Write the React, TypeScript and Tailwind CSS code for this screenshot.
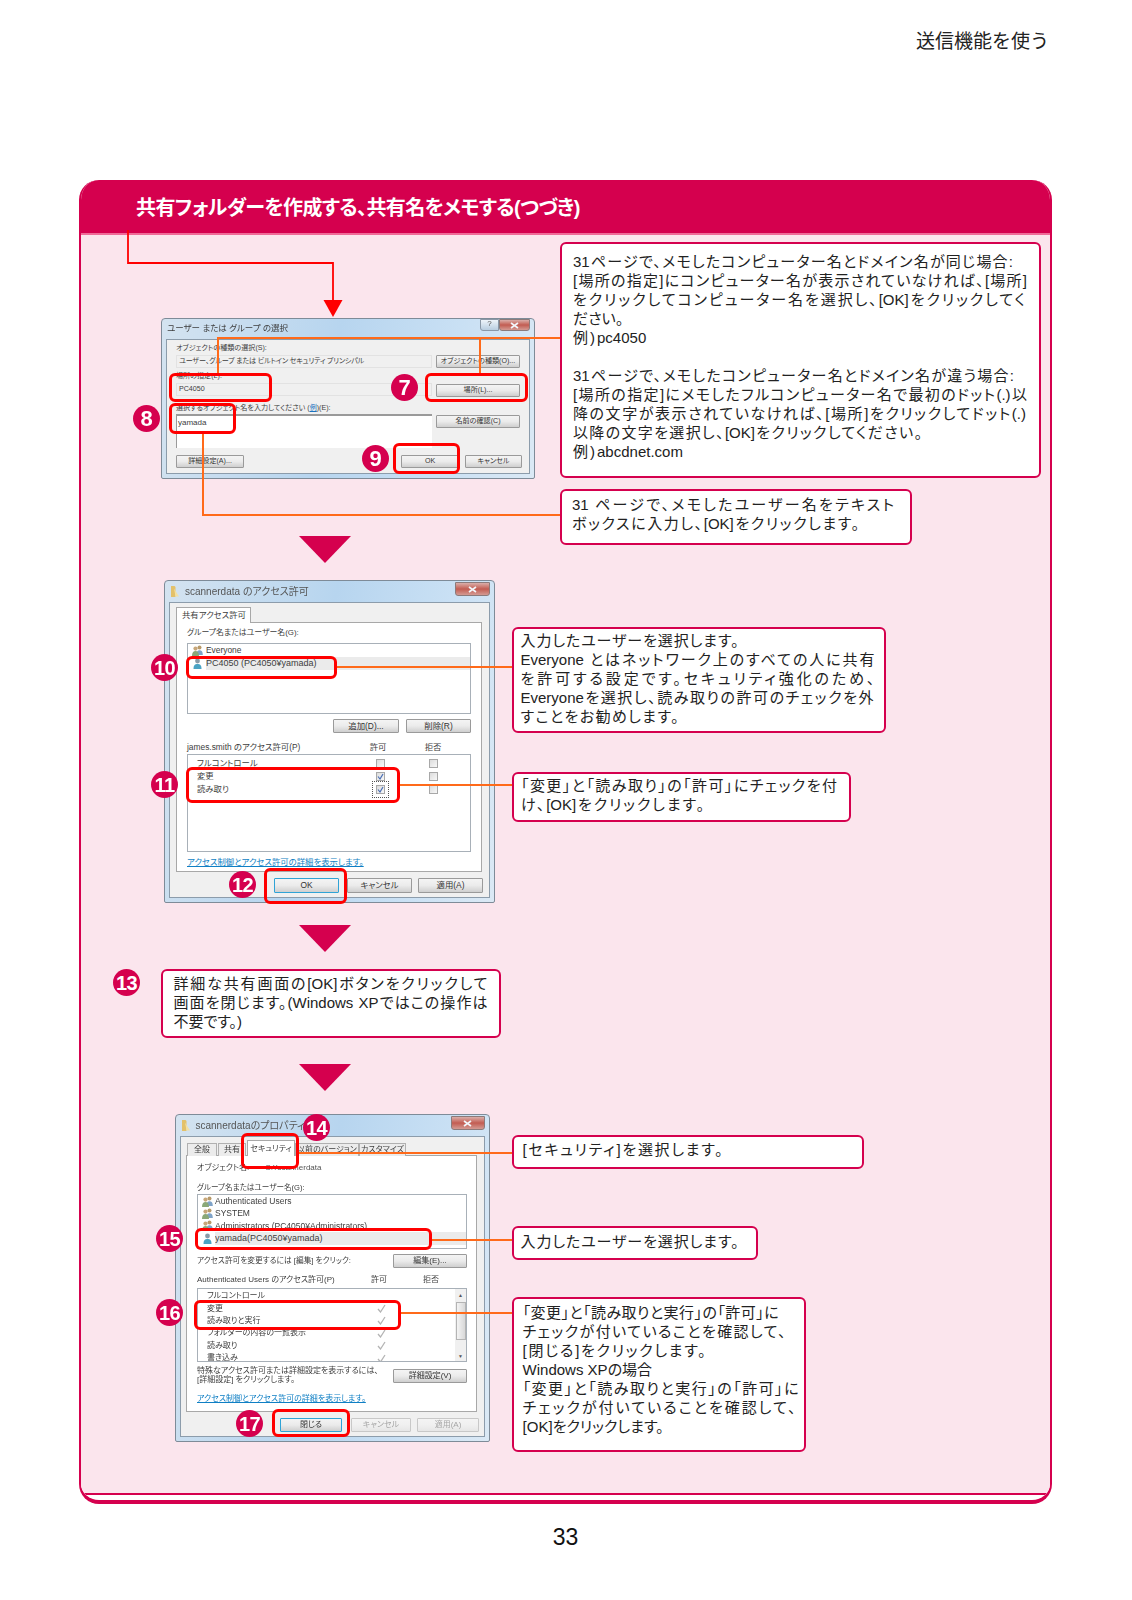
import React from 'react';

const Callout: React.FC<{ className: string; children: React.ReactNode }> = ({ className, children }) => (
  <div className={`border-2 border-[#d5004e] rounded-[6px] bg-white text-[15px] leading-[19px] text-[#222] [font-feature-settings:'palt'] ${className}`}>
    {children}
  </div>
);

const Fit: React.FC<{ className: string; children: React.ReactNode }> = ({ className, children }) => (
  <div className={`h-[19px] [text-align-last:justify] ${className}`}>{children}</div>
);

const Plain: React.FC<{ children: React.ReactNode }> = ({ children }) => (
  <div className="h-[19px]">{children}</div>
);

const Badge: React.FC<{ n: number; className?: string }> = ({ n, className = '' }) => (
  <div className={`absolute z-20 w-[27px] h-[27px] rounded-full bg-[#d5004e] text-white font-bold flex items-center justify-center ${n > 9 ? 'text-[20px] tracking-[-0.5px]' : 'text-[22px]'} ${className}`}>
    {n}
  </div>
);

const Hl: React.FC<{ className: string }> = ({ className }) => (
  <div className={`absolute z-10 border-[3.5px] border-[#ff0000] rounded-[6px] ${className}`} />
);

const Wire: React.FC<{ className: string }> = ({ className }) => (
  <div className={`absolute z-10 bg-[#ff6a1a] ${className}`} />
);

const Triangle = ({ className }: { className: string }) => (
  <svg width="52" height="27" viewBox="0 0 52 27" className={`block ${className}`}>
    <path d="M0 0H52L26 27Z" fill="#d5004e" />
  </svg>
);

const Btn: React.FC<{ className: string; active?: boolean; off?: boolean; children: React.ReactNode }> = ({ className, active, off, children }) => (
  <div
    className={`flex items-center justify-center shrink-0 whitespace-nowrap rounded-[1px] border leading-none bg-gradient-to-b from-[#f4f4f4] via-[#ebebeb] to-[#cfcfcf] ${
      active ? 'border-[#2fa3d6] border-[1.5px]' : 'border-[#9a9a9a]'
    } ${off ? 'text-[#a5a5a5] border-[#c8c8c8] from-[#f2f2f2] via-[#f0f0f0] to-[#e6e6e6]' : 'text-[#333]'} ${className}`}
  >
    {children}
  </div>
);

const CloseBtn = ({ className }: { className: string }) => (
  <div className={`flex items-center justify-center rounded-b-[3px] border border-[#8c7a7a] bg-gradient-to-b from-[#d9aeaa] via-[#c25c52] to-[#d39a93] ${className}`}>
    <svg width="9" height="7" viewBox="0 0 9 7">
      <path d="M1 1L8 6M8 1L1 6" stroke="#f2f6fa" strokeWidth="1.7" />
    </svg>
  </div>
);

const Folder = () => (
  <svg width="11" height="13" viewBox="0 0 11 13" className="shrink-0">
    <path d="M1 1h3.5l1 1v10H1z" fill="#e3c16a" />
    <path d="M4 3.5l5 8H5.5z" fill="#f3e0a2" />
  </svg>
);

const UserIcon = () => (
  <svg width="11" height="11" viewBox="0 0 11 11" className="shrink-0">
    <circle cx="5.5" cy="3" r="2.4" fill="#8a9ba8" />
    <path d="M1.5 11c0-4 1.5-5 4-5s4 1 4 5z" fill="#4aa3c4" />
  </svg>
);

const GroupIcon = () => (
  <svg width="11" height="11" viewBox="0 0 11 11" className="shrink-0">
    <circle cx="7.5" cy="2.6" r="2" fill="#b89a6a" />
    <path d="M4.5 10c0-3.5 1-4.8 3-4.8s3.3 1.3 3.3 4.8z" fill="#7fa3c8" />
    <circle cx="3.5" cy="3.6" r="2.1" fill="#c7a77a" />
    <path d="M0 11c0-3.6 1.3-5 3.5-5S7 7.4 7 11z" fill="#8aa878" />
  </svg>
);

const Check: React.FC<{ on?: boolean; focus?: boolean }> = ({ on, focus }) => (
  <div className={`w-[11px] h-[11px] flex items-center justify-center ${focus ? 'outline outline-1 outline-dotted outline-[#555] outline-offset-[2px]' : ''}`}>
    <div className="w-[9px] h-[9px] border border-[#a8a8a8] bg-gradient-to-br from-[#dcdcdc] to-[#f8f8f8] flex items-center justify-center">
      {on && (
        <svg width="7" height="7" viewBox="0 0 7 7">
          <path d="M1 3.5L3 6L6 1" stroke="#4a6fb5" strokeWidth="1.2" fill="none" />
        </svg>
      )}
    </div>
  </div>
);

const Tick = () => (
  <svg width="9" height="9" viewBox="0 0 9 9">
    <path d="M1 5L3.5 8L8 1" stroke="#b4b4b4" strokeWidth="1.3" fill="none" />
  </svg>
);

const Frame: React.FC<{ className: string; children: React.ReactNode }> = ({ className, children }) => (
  <div className={`border border-[#7e8b98] rounded-t-[4px] rounded-b-[2px] bg-[linear-gradient(100deg,#d4e3f0_0%,#b7d5ef_45%,#c9e0f4_75%,#dbe9f5_100%)] flex flex-col [filter:blur(0.3px)] text-[#3d3d3d] leading-none whitespace-nowrap [font-feature-settings:'palt'] ${className}`}>
    {children}
  </div>
);

const UserSelectDialog = () => (
  <div className="relative w-[372px] h-[160px]">
    <Frame className="w-[374px] h-[161px] -ml-px">
      <div className="h-[20px] flex items-start justify-between pl-[5px] pr-[4px]">
        <span className="text-[8.5px] mt-[5px]">ユーザー または グループ の選択</span>
        <div className="flex">
          <div className="w-[19px] h-[12px] rounded-bl-[3px] border border-[#8a98a8] bg-gradient-to-b from-[#eef4fa] to-[#b8cde0] text-[8px] text-[#555] text-center">?</div>
          <CloseBtn className="w-[31px] h-[12px]" />
        </div>
      </div>
      <div className="mx-[4px] h-[135px] border border-[#8c9cab] bg-[#f0f0f0] pl-[9px] pr-[9px] pt-[5px] text-[7.1px]">
        <div className="h-[7px] flex items-center">オブジェクトの種類の選択(S):</div>
        <div className="mt-[3px] flex justify-between">
          <div className="w-[256px] h-[13px] border border-[#e2e2e2] flex items-center px-[2px] tracking-[-0.2px]">ユーザー、グループ または ビルトイン セキュリティ プリンシパル</div>
          <Btn className="w-[84px] h-[13px]">オブジェクトの種類(O)...</Btn>
        </div>
        <div className="mt-[5px] h-[7px] flex items-center">場所の指定(L):</div>
        <div className="mt-[3px] flex justify-between">
          <div className="w-[256px] h-[13px] border border-[#e2e2e2] flex items-center px-[2px]">PC4050</div>
          <Btn className="w-[84px] h-[13px] mt-[1px]">場所(L)...</Btn>
        </div>
        <div className="mt-[8px] h-[7px] flex items-center whitespace-pre">選択するオブジェクト名を入力してください (<span className="text-[#1a73c0] underline">例</span>)(E):</div>
        <div className="mt-[2px] flex justify-between">
          <div className="w-[256px] h-[34px] border-t-2 border-l border-[#9a9a9a] bg-white px-[1px] pt-[3px] text-[8px]">yamada</div>
          <Btn className="w-[84px] h-[13px] mt-[1px]">名前の確認(C)</Btn>
        </div>
        <div className="mt-[7px] flex">
          <Btn className="w-[68px] h-[13px]">詳細設定(A)...</Btn>
          <Btn className="w-[58px] h-[13px] ml-[157px]">OK</Btn>
          <Btn className="w-[57px] h-[13px] ml-[6px]">キャンセル</Btn>
        </div>
      </div>
    </Frame>

    {/* arrow from the header down to the dialog */}
    <svg width="220" height="90" viewBox="0 0 220 90" className="absolute left-[-35px] top-[-88px] z-10 overflow-visible">
      <path d="M1 0V33H206V70" fill="none" stroke="#ff0000" strokeWidth="1.8" />
      <path d="M196.5 70H215.5L206 87Z" fill="#ff0000" />
    </svg>

    <Wire className="left-[55px] top-[19px] w-[343px] h-[2px]" />
    <Wire className="left-[55px] top-[19px] w-[2px] h-[37px]" />
    <Wire className="left-[317px] top-[19px] w-[2px] h-[37px]" />
    <Wire className="left-[40px] top-[115px] w-[2px] h-[82px]" />
    <Wire className="left-[40px] top-[196px] w-[358px] h-[2px]" />

    <Hl className="left-[7px] top-[55px] w-[103px] h-[29px]" />
    <Hl className="left-[263px] top-[55px] w-[103px] h-[29px]" />
    <Hl className="left-[7px] top-[85px] w-[67px] h-[31px]" />
    <Hl className="left-[231px] top-[125px] w-[67px] h-[31px]" />

    <Badge n={7} className="left-[229px] top-[56px]" />
    <Badge n={8} className="left-[-29px] top-[87px]" />
    <Badge n={9} className="left-[200px] top-[127px]" />
  </div>
);

const SharePermDialog = () => (
  <div className="relative w-[330px] h-[323px]">
    <Frame className="w-[331px] h-[323px]">
      <div className="h-[21px] flex items-start justify-between pl-[5px] pr-[4px]">
        <div className="flex items-center gap-[4px] mt-[4px]">
          <Folder />
          <span className="text-[10px] text-[#555]">scannerdata のアクセス許可</span>
        </div>
        <CloseBtn className="w-[35px] h-[14px] mt-[1px]" />
      </div>
      <div className="mx-[4px] h-[296px] border border-[#8c9cab] bg-[#f0f0f0] pl-[6px] pr-[6px] pt-[4px] text-[8.4px]">
        <div className="w-[75px] h-[16px] -mb-px relative z-10 border border-b-0 border-[#a8a8a8] bg-white flex items-center pl-[5px]">共有アクセス許可</div>
        <div className="w-[306px] h-[250px] border border-[#a8a8a8] bg-white pl-[10px] pt-[5px]">
          <div className="h-[10px] flex items-center text-[7.9px]">グループ名またはユーザー名(G):</div>
          <div className="mt-[5px] w-[284px] h-[71px] border border-[#a8b0b8] pl-[4px]">
            <div className="h-[13px] flex items-center gap-[3px]"><GroupIcon />Everyone</div>
            <div className="h-[13px] flex items-center gap-[3px] text-[9px]"><UserIcon /><span className="flex-1 h-[13px] bg-[#ebebeb] flex items-center">PC4050 (PC4050¥yamada)</span></div>
          </div>
          <div className="mt-[5px] w-[284px] flex justify-end gap-[7px]">
            <Btn className="w-[66px] h-[14px]">追加(D)...</Btn>
            <Btn className="w-[65px] h-[14px]">削除(R)</Btn>
          </div>
          <div className="mt-[9px] h-[10px] flex items-center">
            <span className="w-[181px]">james.smith のアクセス許可(P)</span>
            <span className="w-[20px] text-center">許可</span>
            <span className="w-[20px] text-center ml-[35px]">拒否</span>
          </div>
          <div className="mt-[2px] w-[284px] h-[98px] border border-[#a8b0b8] pl-[9px] pt-[2px]">
            {[['フルコントロール', false, false], ['変更', true, false], ['読み取り', true, true]].map(([name, on, focus]) => (
              <div key={name as string} className="h-[13px] flex items-center">
                <span className="w-[178px]">{name}</span>
                <div className="w-[11px]"><Check on={on as boolean} focus={focus as boolean} /></div>
                <div className="w-[11px] ml-[42px]"><Check /></div>
              </div>
            ))}
          </div>
          <div className="mt-[5px] h-[10px] flex items-center text-[#0f7fc4] underline">アクセス制御とアクセス許可の詳細を表示します。</div>
        </div>
        <div className="mt-[6px] flex justify-end">
          <Btn active className="w-[65px] h-[15px]">OK</Btn>
          <Btn className="w-[65px] h-[15px] ml-[8px]">キャンセル</Btn>
          <Btn className="w-[65px] h-[15px] ml-[6px]">適用(A)</Btn>
        </div>
      </div>
    </Frame>

    <Wire className="left-[173px] top-[86px] w-[175px] h-[1.5px]" />
    <Wire className="left-[236px] top-[204px] w-[112px] h-[1.5px]" />

    <Hl className="left-[22px] top-[76px] w-[151px] h-[23px]" />
    <Hl className="left-[22px] top-[187px] w-[214px] h-[36px]" />
    <Hl className="left-[100px] top-[288px] w-[83px] h-[36px]" />

    <Badge n={10} className="left-[-13px] top-[74px]" />
    <Badge n={11} className="left-[-13px] top-[191px]" />
    <Badge n={12} className="left-[65px] top-[291px]" />
  </div>
);

const SecurityDialog = () => (
  <div className="relative w-[313px] h-[328px]">
    <Frame className="w-[315px] h-[328px] -ml-[1.5px]">
      <div className="h-[21px] flex items-start justify-between pl-[5px] pr-[4px]">
        <div className="flex items-center gap-[4px] mt-[4px]">
          <Folder />
          <span className="text-[10px] text-[#555]">scannerdataのプロパティ</span>
        </div>
        <CloseBtn className="w-[34px] h-[14px] mt-[1px]" />
      </div>
      <div className="mx-[4px] h-[301px] border border-[#8c9cab] bg-[#f0f0f0] pl-[5.5px] pt-[3px] text-[8px]">
        <div className="flex items-end h-[16px] -mb-px relative z-10 pl-[1px]">
          <div className="w-[30px] h-[13px] border border-b-0 border-[#b0b0b0] bg-[#ececec] flex items-center justify-center">全般</div>
          <div className="w-[28px] h-[13px] ml-[1px] border border-b-0 border-[#b0b0b0] bg-[#ececec] flex items-center justify-center">共有</div>
          <div className="w-[48px] h-[16px] ml-[1px] border border-b-0 border-[#a8a8a8] bg-white flex items-center justify-center">セキュリティ</div>
          <div className="w-[64px] h-[13px] border border-b-0 border-[#b0b0b0] bg-[#ececec] flex items-center justify-center">以前のバージョン</div>
          <div className="w-[47px] h-[13px] border border-b-0 border-[#b0b0b0] bg-[#ececec] flex items-center justify-center">カスタマイズ</div>
        </div>
        <div className="w-[291px] h-[257px] border border-[#a8a8a8] bg-white pl-[10px] pt-[7px]">
          <div className="h-[10px] flex items-center">
            <span className="w-[68px]">オブジェクト名:</span>
            <span className="text-[#555]">C:¥scannerdata</span>
          </div>
          <div className="mt-[10px] h-[10px] flex items-center text-[7.6px]">グループ名またはユーザー名(G):</div>
          <div className="mt-[1px] w-[270px] h-[55px] border border-[#a8b0b8] overflow-hidden pl-[4px] text-[8.5px]">
            <div className="h-[12.4px] flex items-center gap-[2px]"><GroupIcon />Authenticated Users</div>
            <div className="h-[12.4px] flex items-center gap-[2px]"><GroupIcon />SYSTEM</div>
            <div className="h-[12.4px] flex items-center gap-[2px]"><GroupIcon />Administrators (PC4050¥Administrators)</div>
            <div className="h-[13px] flex items-center gap-[2px] text-[9px]"><UserIcon /><span className="flex-1 h-[13px] bg-[#ebebeb] flex items-center">yamada(PC4050¥yamada)</span></div>
          </div>
          <div className="mt-[5px] w-[270px] h-[14px] flex items-center justify-between">
            <span className="text-[7.7px]">アクセス許可を変更するには [編集] をクリック:</span>
            <Btn className="w-[74px] h-[14px]">編集(E)...</Btn>
          </div>
          <div className="mt-[7px] h-[10px] flex items-center">
            <span className="w-[172px]">Authenticated Users のアクセス許可(P)</span>
            <span className="w-[20px] text-center">許可</span>
            <span className="w-[20px] text-center ml-[32px]">拒否</span>
          </div>
          <div className="mt-[3px] w-[270px] h-[74px] border border-[#a8b0b8] overflow-hidden relative pl-[9px] pt-[1px]">
            {['フルコントロール', '変更', '読み取りと実行', 'フォルダーの内容の一覧表示', '読み取り', '書き込み'].map((name, i) => (
              <div key={name} className="h-[12.4px] flex items-center">
                <span className="w-[170px]">{name}</span>
                {i > 0 && <Tick />}
              </div>
            ))}
            <div className="absolute right-0 top-0 bottom-0 w-[11px] bg-[#f0f0f0] flex flex-col items-center text-[5px] text-[#555]">
              <span className="h-[13px] flex items-center">▲</span>
              <div className="w-[10px] h-[38px] border border-[#b4b4b4] bg-gradient-to-r from-[#f4f4f4] to-[#d8d8d8]" />
              <span className="mt-auto h-[10px] flex items-center">▼</span>
            </div>
          </div>
          <div className="mt-[5px] w-[270px] flex items-center justify-between">
            <div className="leading-[8.5px]">
              <div>特殊なアクセス許可または詳細設定を表示するには、</div>
              <div>[詳細設定] をクリックします。</div>
            </div>
            <Btn className="w-[74px] h-[14px]">詳細設定(V)</Btn>
          </div>
          <div className="mt-[10px] h-[10px] flex items-center text-[#0f7fc4] underline">アクセス制御とアクセス許可の詳細を表示します。</div>
        </div>
        <div className="mt-[6px] flex">
          <Btn active className="w-[62px] h-[14px] ml-[94px]">閉じる</Btn>
          <Btn off className="w-[60px] h-[14px] ml-[9px]">キャンセル</Btn>
          <Btn off className="w-[62px] h-[14px] ml-[6px]">適用(A)</Btn>
        </div>
      </div>
    </Frame>

    <Wire className="left-[123px] top-[38px] w-[213px] h-[1.5px]" />
    <Wire className="left-[255px] top-[125px] w-[81px] h-[1.5px]" />
    <Wire className="left-[225px] top-[198px] w-[111px] h-[1.5px]" />

    <Hl className="left-[65px] top-[19px] w-[58px] h-[36px]" />
    <Hl className="left-[19px] top-[114px] w-[237px] h-[22px]" />
    <Hl className="left-[18px] top-[186px] w-[207px] h-[30px]" />
    <Hl className="left-[96px] top-[295px] w-[78px] h-[28px]" />

    <Badge n={14} className="left-[127px] top-[0px]" />
    <Badge n={15} className="left-[-20px] top-[111px]" />
    <Badge n={16} className="left-[-20px] top-[185px]" />
    <Badge n={17} className="left-[60px] top-[296px]" />
  </div>
);

export default function App() {
  return (
    <div className="w-[1132px] h-[1600px] bg-white overflow-hidden flex flex-col [font-family:'Liberation_Sans','Noto_Sans_CJK_JP',sans-serif]">
      <div className="h-[180px] pt-[30px] pr-[83px] text-right text-[19px] leading-[24px] text-[#222]">送信機能を使う</div>

      <div className="ml-[79px] w-[973px] h-[1324px] flex flex-col rounded-[20px] border-x-2 border-b-[4px] border-[#d5004e] bg-white overflow-hidden">
        <div className="h-[53px] shrink-0 bg-[#d5004e] pl-[55px] flex items-center pt-[2px] text-white font-bold text-[20px] tracking-[-0.6px] [font-feature-settings:'palt']">
          共有フォルダーを作成する、共有名をメモする(つづき)
        </div>
        <div className="h-[1262px] shrink-0 bg-[#fbe5ed] border-y-2 border-[#f06a98] border-b-[#d5004e]">
          {/* step 7-9 */}
          <div className="flex">
            <div className="w-[479px] pt-[83px] pl-[81px]">
              <UserSelectDialog />
              <Triangle className="mt-[58px] ml-[137px]" />
            </div>
            <div className="pt-[7px]">
              <Callout className="w-[481px] h-[236px] pl-[11px] pt-[8px]">
                <Fit className="w-[440px]">31ページで、メモしたコンピューター名とドメイン名が同じ場合:</Fit>
                <Fit className="w-[454px]">[場所の指定]にコンピューター名が表示されていなければ、[場所]</Fit>
                <Fit className="w-[452px]">をクリックしてコンピューター名を選択し、[OK]をクリックしてく</Fit>
                <Plain>ださい。</Plain>
                <Plain>例<span className="mx-[2px]">)</span>pc4050</Plain>
                <div className="h-[19px]" />
                <Fit className="w-[441px]">31ページで、メモしたコンピューター名とドメイン名が違う場合:</Fit>
                <Fit className="w-[454px]">[場所の指定]にメモしたフルコンピューター名で最初のドット(.)以</Fit>
                <Fit className="w-[453px]">降の文字が表示されていなければ、[場所]をクリックしてドット(.)</Fit>
                <Fit className="w-[349px]">以降の文字を選択し、[OK]をクリックしてください。</Fit>
                <Plain>例<span className="mx-[2px]">)</span>abcdnet.com</Plain>
              </Callout>
              <Callout className="mt-[11px] w-[352px] h-[56px] pl-[10px] pt-[4px]">
                <Fit className="w-[322px]">31 ページで、メモしたユーザー名をテキスト</Fit>
                <Fit className="w-[287px]">ボックスに入力し、[OK]をクリックします。</Fit>
              </Callout>
            </div>
          </div>

          {/* step 10-12 */}
          <div className="flex mt-[-3px]">
            <div className="w-[431px] pt-[20px] pl-[83px]">
              <SharePermDialog />
              <Triangle className="mt-[22px] ml-[135px]" />
            </div>
            <div className="pt-[67px]">
              <Callout className="w-[374px] h-[106px] pl-[6.5px] pt-[1.5px]">
                <Fit className="w-[218px]">入力したユーザーを選択します。</Fit>
                <Fit className="w-[354px]">Everyone とはネットワーク上のすべての人に共有</Fit>
                <Fit className="w-[354px]">を許可する設定です。セキュリティ強化のため、</Fit>
                <Fit className="w-[353px]">Everyoneを選択し、読み取りの許可のチェックを外</Fit>
                <Fit className="w-[158px]">すことをお勧めします。</Fit>
              </Callout>
              <Callout className="mt-[39px] w-[339px] h-[50px] pl-[7px] pt-[1.5px]">
                <Fit className="w-[316px]">「変更」と「読み取り」の「許可」にチェックを付</Fit>
                <Fit className="w-[183px]">け、[OK]をクリックします。</Fit>
              </Callout>
            </div>
          </div>

          {/* step 13 */}
          <div className="relative mt-[17px] ml-[80px] w-[340px]">
            <Badge n={13} className="left-[-48px] top-[0px]" />
            <Callout className="mt-[2px] w-[340px] h-[69px] pl-[10.5px] pt-[2.5px]">
              <Fit className="w-[314px]">詳細な共有画面の[OK]ボタンをクリックして</Fit>
              <Fit className="w-[314px]">画面を閉じます。(Windows XPではこの操作は</Fit>
              <Plain>不要です。)</Plain>
            </Callout>
          </div>
          <Triangle className="mt-[26px] ml-[218px]" />

          {/* step 14-17 */}
          <div className="flex mt-[23px]">
            <div className="w-[431px] pl-[95px]">
              <SecurityDialog />
            </div>
            <div className="pt-[21px]">
              <Callout className="w-[352px] h-[34px] pl-[8.6px] pt-[3px]">
                <Fit className="w-[200px]">[セキュリティ]を選択します。</Fit>
              </Callout>
              <Callout className="mt-[57px] w-[246px] h-[34px] pl-[6.5px] pt-[3.5px]">
                <Fit className="w-[218px]">入力したユーザーを選択します。</Fit>
              </Callout>
              <Callout className="mt-[37px] w-[294px] h-[155px] pl-[8.6px] pt-[4px]">
                <Fit className="w-[256px]">「変更」と「読み取りと実行」の「許可」に</Fit>
                <Fit className="w-[263px]">チェックが付いていることを確認して、</Fit>
                <Fit className="w-[183px]">[閉じる]をクリックします。</Fit>
                <Plain>Windows XPの場合</Plain>
                <Fit className="w-[276px]">「変更」と「読み取りと実行」の「許可」に</Fit>
                <Fit className="w-[273px]">チェックが付いていることを確認して、</Fit>
                <Plain>[OK]をクリックします。</Plain>
              </Callout>
            </div>
          </div>
        </div>
      </div>

      <div className="mt-[20px] text-center text-[23px] leading-[26px] text-[#111] w-[1131px]">33</div>
    </div>
  );
}
